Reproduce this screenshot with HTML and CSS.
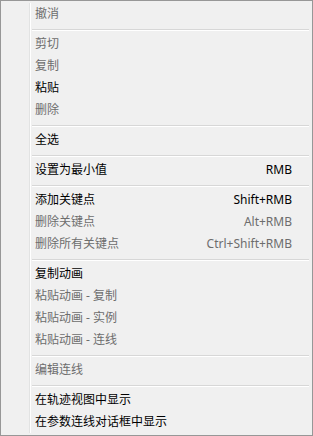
FILE: index.html
```html
<!DOCTYPE html>
<html lang="zh-CN">
<head>
  <meta charset="UTF-8" />
  <title>右键菜单</title>
  <link rel="stylesheet" href="styles.css">
</head>
<body>
  <div class="menu">
    <ul class="list">
      <li class="item off">撤消</li>
      <li class="sep"></li>
      <li class="item off">剪切</li>
      <li class="item off">复制</li>
      <li class="item">粘贴</li>
      <li class="item off">删除</li>
      <li class="sep"></li>
      <li class="item">全选</li>
      <li class="sep"></li>
      <li class="item"><span>设置为最小值</span><span class="key">RMB</span></li>
      <li class="sep"></li>
      <li class="item"><span>添加关键点</span><span class="key">Shift+RMB</span></li>
      <li class="item off"><span>删除关键点</span><span class="key">Alt+RMB</span></li>
      <li class="item off"><span>删除所有关键点</span><span class="key">Ctrl+Shift+RMB</span></li>
      <li class="sep"></li>
      <li class="item">复制动画</li>
      <li class="item off">粘贴动画 - 复制</li>
      <li class="item off">粘贴动画 - 实例</li>
      <li class="item off">粘贴动画 - 连线</li>
      <li class="sep"></li>
      <li class="item off">编辑连线</li>
      <li class="sep"></li>
      <li class="item">在轨迹视图中显示</li>
      <li class="item">在参数连线对话框中显示</li>
    </ul>
  </div>
</body>
</html>
```

FILE: styles.css
```css
*, *::before, *::after { box-sizing: border-box; }
body {
  margin:0; padding:0;
  font-family: "Noto Sans", "Noto Sans CJK SC", sans-serif;
  font-size:12px;
  color:#000;
}

/* メニュー本体 */
.menu {
  width:313px; height:436px;
  background:#f0f0f0;
  border:1px solid #979797;
  padding:2px;
}
.list {
  list-style:none; margin:0 0 0 26px; padding:0;
  border-left:1px solid #e2e3e3;
  box-shadow:inset 1px 0 0 #fff;
  height:100%;
}
.item {
  display:flex; justify-content:space-between;
  height:22px; line-height:22px;
  padding:0 18px 0 5px;
  white-space:nowrap;
}
.item.off { color:#6d6d6d; }

/* 区切り線 */
.sep {
  height:2px;
  margin:4px 1px 2px 2px;
  border-top:1px solid #d7d7d7;
  border-bottom:1px solid #fff;
}
```
